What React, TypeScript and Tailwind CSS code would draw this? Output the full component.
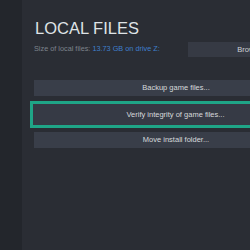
export default function App() {
  const font = { fontFamily: '"Liberation Sans", Arial, sans-serif' };
  return (
    <div className="w-[250px] h-[250px] overflow-hidden flex bg-[#2a2d34]" style={font}>
      <div className="w-[22px] shrink-0 bg-[#23262c]" />
      <div className="flex flex-col pl-[12px] pt-[20px] w-[300px] shrink-0">
        <div className="text-[16.5px] leading-[17px] tracking-[0px] pl-[1px] text-[#dfe3e6]">LOCAL FILES</div>
        <div className="flex items-center mt-[5px] w-[284px]">
          <div className="text-[7.3px] text-[#7d838c] whitespace-nowrap">
            Size of local files: <span className="text-[#3f7fcc]">13.73 GB on drive Z:</span>
          </div>
          <div className="ml-auto w-[130px] h-[15px] bg-[#363a44] text-[#cfd3d7] text-[7.5px] flex items-center justify-center">Browse...</div>
        </div>
        <div className="mt-[23px] w-[284px] h-[16px] bg-[#393e49] text-[#d6d9dc] text-[7.5px] flex items-center justify-center">Backup game files...</div>
        <div className="mt-[5px] -ml-[4px] w-[291px] h-[27px] border-[3px] border-[#1fa587] flex">
          <div className="flex-1 bg-[#363a45] text-[#d6d9dc] text-[7.5px] flex items-center justify-center">Verify integrity of game files...</div>
        </div>
        <div className="mt-[4px] w-[284px] h-[16px] bg-[#393e49] text-[#d6d9dc] text-[7.5px] flex items-center justify-center">Move install folder...</div>
      </div>
    </div>
  );
}
